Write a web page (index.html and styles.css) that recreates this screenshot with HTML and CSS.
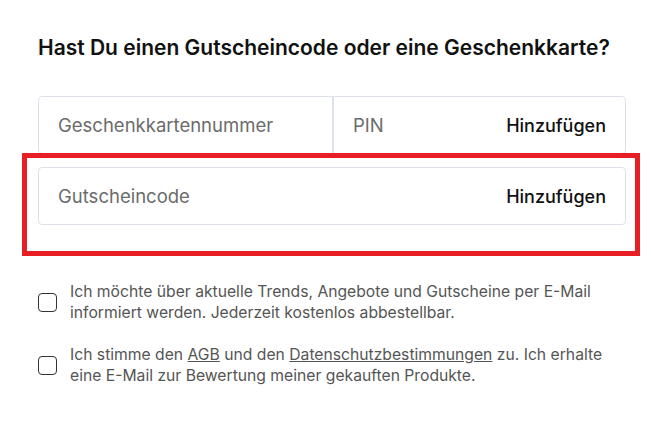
FILE: index.html
```html
<!DOCTYPE html>
<html lang="de">
<head>
  <meta charset="UTF-8" />
  <meta name="viewport" content="width=device-width, initial-scale=1.0"/>
  <title>Gutschein einlösen</title>
  <link rel="stylesheet" href="styles.css">
</head>
<body>
  <div class="voucher">
    <h2>Hast Du einen Gutscheincode oder eine Geschenkkarte?</h2>

    <div class="field-row">
      <div class="field field-card">Geschenkkartennummer</div>
      <div class="field field-pin">
        <span>PIN</span>
        <a href="#" class="add-link">Hinzufügen</a>
      </div>
    </div>

    <div class="field-row highlight">
      <div class="field field-code">
        <span>Gutscheincode</span>
        <a href="#" class="add-link">Hinzufügen</a>
      </div>
    </div>

    <div class="consent">
      <label class="check">
        <span class="box"></span>
        <span class="check-text">Ich möchte über aktuelle Trends, Angebote und Gutscheine per E-Mail informiert werden. Jederzeit kostenlos abbestellbar.</span>
      </label>
      <label class="check">
        <span class="box"></span>
        <span class="check-text">Ich stimme den <a href="#">AGB</a> und den <a href="#">Datenschutzbestimmungen</a> zu. Ich erhalte eine E-Mail zur Bewertung meiner gekauften Produkte.</span>
      </label>
    </div>
  </div>
</body>
</html>
```

FILE: styles.css
```css
body {
  margin: 0;
  font-family: Inter, "Liberation Sans", Arial, sans-serif;
  background-color: #fff;
  color: #111;
}
.voucher {
  padding: 35px 25px 0 38px;
}
.voucher h2 {
  font-size: 21px;
  font-weight: 600;
  line-height: 26px;
  margin: 0 0 35px 0;
  color: #111;
}
.field-row {
  display: flex;
  width: 588px;
  height: 58px;
  box-sizing: border-box;
  border: 1px solid #dde2ea;
  border-radius: 4px;
}
.field {
  display: flex;
  align-items: center;
  font-size: 18.5px;
  color: #6b6b6b;
  padding-left: 19px;
}
.field-card {
  width: 274px;
  border-right: 2px solid #dde2ea;
}
.field-pin,
.field-code {
  flex: 1;
  justify-content: space-between;
  padding-right: 19px;
}
.add-link {
  font-size: 18px;
  font-weight: 500;
  color: #111;
  text-decoration: none;
}
.highlight {
  position: relative;
  margin-top: 13px;
}
.highlight::after {
  content: "";
  position: absolute;
  top: -15px;
  left: -17px;
  right: -15px;
  bottom: -32px;
  border: 5px solid #e81e25;
}
.consent {
  margin-top: 56px;
}
.check {
  display: flex;
  align-items: center;
  margin-bottom: 21px;
  font-size: 15.7px;
  line-height: 21px;
  color: #555;
}
.box {
  flex: none;
  width: 17px;
  height: 17px;
  border: 1.5px solid #333;
  border-radius: 4px;
  margin-right: 13px;
}
.check-text {
  width: 545px;
}
.check-text a {
  color: #555;
}
```
